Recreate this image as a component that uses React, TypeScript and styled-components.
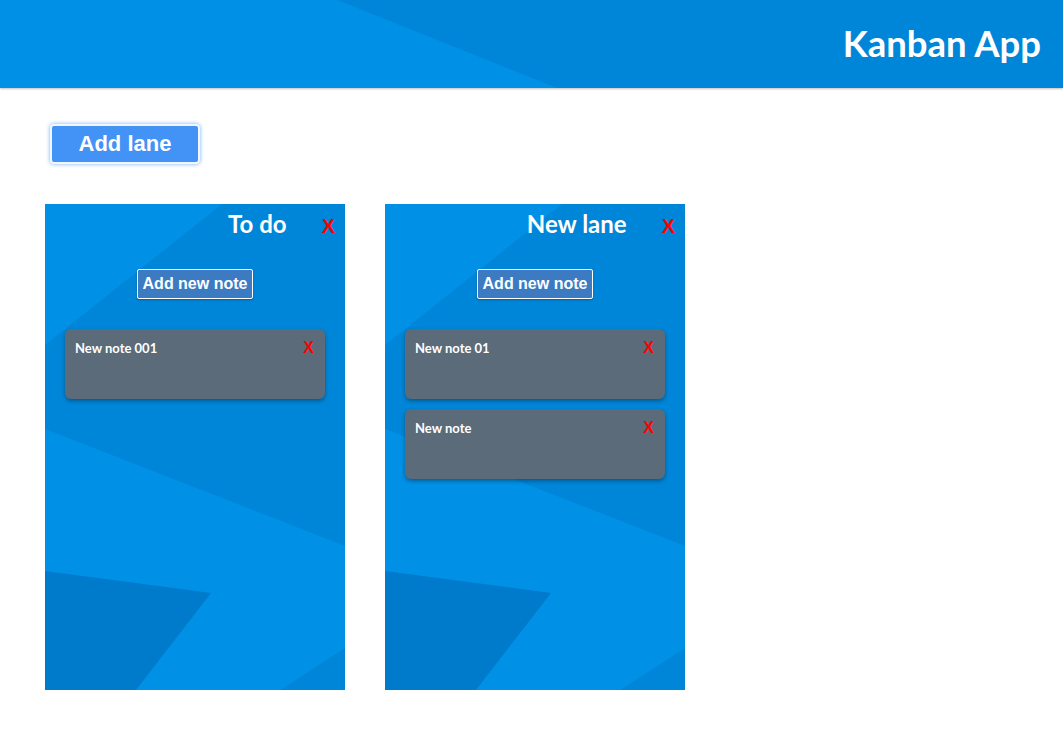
import styled, { createGlobalStyle } from "styled-components";

const headerArt = `<svg xmlns='http://www.w3.org/2000/svg' viewBox='0 0 1063 88' preserveAspectRatio='none'><rect width='1063' height='88' fill='#0091e6'/><polygon points='337,0 1063,0 1063,88 557,88' fill='#0086d9'/></svg>`;

const laneArt = `<svg xmlns='http://www.w3.org/2000/svg' viewBox='0 0 300 486' preserveAspectRatio='none'><rect width='300' height='486' fill='#0086d9'/><polygon points='0,0 177,0 0,141' fill='#0091e6'/><polygon points='0,225 300,342 300,486 0,486' fill='#0091e6'/><polygon points='0,367 166,389 91,486 0,486' fill='#007acb'/><polygon points='300,444 235,486 300,486' fill='#0086d9'/></svg>`;

const svgUrl = (svg: string) => `url("data:image/svg+xml,${encodeURIComponent(svg)}")`;

const GlobalStyle = createGlobalStyle`
  html, body {
    margin: 0;
    padding: 0;
    background: #ffffff;
    font-family: Lato, "Liberation Sans", sans-serif;
  }
`;

const Header = styled.header`
  height: 88px;
  display: flex;
  align-items: center;
  justify-content: flex-end;
  padding: 0 22px;
  background: ${svgUrl(headerArt)} no-repeat;
  background-size: 100% 100%;
  box-shadow: 0 1px 2px rgba(0, 0, 0, 0.25);
`;

const Title = styled.h1`
  margin: 0 0 2px;
  color: #ffffff;
  font-family: Lato, sans-serif;
  font-weight: 700;
  font-size: 36.5px;
`;

const Main = styled.main`
  padding: 36px 45px 0;
`;

const AddLaneButton = styled.button`
  width: 150px;
  height: 40px;
  margin-left: 5px;
  background: #4392f6;
  color: #ffffff;
  font-family: "Liberation Sans", Arial, sans-serif;
  font-weight: 700;
  font-size: 22px;
  border: 2px solid #f2f7ff;
  border-radius: 4px;
  box-shadow: 0 0 4px rgba(66, 146, 246, 0.7);
  cursor: pointer;
`;

const Lanes = styled.div`
  display: flex;
  gap: 40px;
  margin-top: 40px;
`;

const Lane = styled.section`
  width: 300px;
  height: 486px;
  display: flex;
  flex-direction: column;
  background: ${svgUrl(laneArt)} no-repeat;
  background-size: 100% 100%;
`;

const LaneHeader = styled.div`
  display: flex;
  align-items: baseline;
  justify-content: flex-end;
  padding: 5px 10px 0 0;
  height: 40px;
  box-sizing: border-box;
`;

const LaneTitle = styled.h2`
  margin: 0;
  color: #ffffff;
  font-family: Lato, sans-serif;
  font-weight: 700;
  font-size: 24px;
`;

const DeleteX = styled.span<{ $size: number }>`
  color: #ff0000;
  font-family: "Liberation Sans", Arial, sans-serif;
  font-weight: 700;
  font-size: ${(p) => p.$size}px;
  cursor: pointer;
`;

const LaneDelete = styled(DeleteX)`
  margin-left: 35px;
`;

const AddNoteButton = styled.button`
  align-self: center;
  margin-top: 25px;
  height: 30px;
  padding: 0 5px;
  background: #3c7bc2;
  color: #ffffff;
  font-family: "Liberation Sans", Arial, sans-serif;
  font-weight: 700;
  font-size: 16px;
  border: 1px solid #ffffff;
  border-radius: 2px;
  box-shadow: 0 1px 2px rgba(0, 0, 0, 0.3);
  cursor: pointer;
`;

const NoteList = styled.ul`
  list-style: none;
  margin: 30px 0 0;
  padding: 0 20px;
  display: flex;
  flex-direction: column;
  gap: 10px;
`;

const Note = styled.li`
  height: 70px;
  box-sizing: border-box;
  padding: 10px 11px 0 10px;
  display: flex;
  justify-content: space-between;
  align-items: baseline;
  background: #5b6b7a;
  border-radius: 6px;
  box-shadow: 0 2px 4px rgba(0, 0, 0, 0.35);
`;

const NoteText = styled.span`
  color: #ffffff;
  font-family: Lato, sans-serif;
  font-weight: 700;
  font-size: 13px;
`;

const lanes = [
  { title: "To do", notes: ["New note 001"] },
  { title: "New lane", notes: ["New note 01", "New note"] },
];

export default function App() {
  return (
    <>
      <GlobalStyle />
      <Header>
        <Title>Kanban App</Title>
      </Header>
      <Main>
        <AddLaneButton>Add lane</AddLaneButton>
        <Lanes>
          {lanes.map((lane) => (
            <Lane key={lane.title}>
              <LaneHeader>
                <LaneTitle>{lane.title}</LaneTitle>
                <LaneDelete $size={20}>X</LaneDelete>
              </LaneHeader>
              <AddNoteButton>Add new note</AddNoteButton>
              <NoteList>
                {lane.notes.map((note) => (
                  <Note key={note}>
                    <NoteText>{note}</NoteText>
                    <DeleteX $size={16}>X</DeleteX>
                  </Note>
                ))}
              </NoteList>
            </Lane>
          ))}
        </Lanes>
      </Main>
    </>
  );
}
